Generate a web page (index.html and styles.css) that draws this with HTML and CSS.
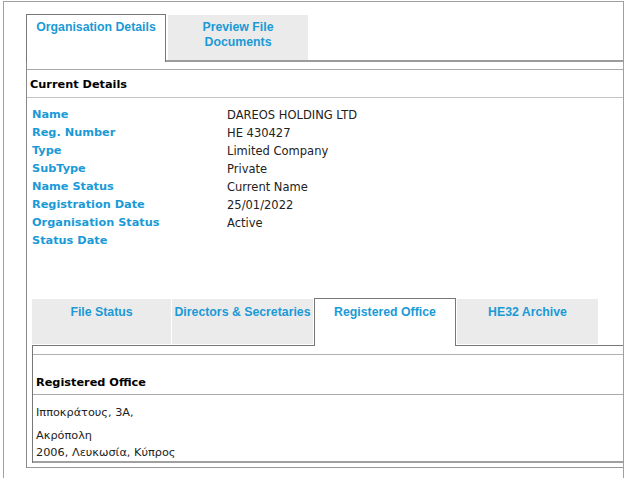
FILE: index.html
```html
<!DOCTYPE html>
<html lang="en">
<head>
    <meta charset="UTF-8">
    <meta name="viewport" content="width=device-width, initial-scale=1.0">
    <title>Organisation Details</title>
    <link rel="stylesheet" href="styles.css">
</head>
<body>
<div class="frame">
    <div class="tabs top-tabs">
        <div class="tab active">Organisation Details</div>
        <div class="tab">Preview File<br>Documents</div>
    </div>
    <div class="panel">
        <div class="section-title">Current Details</div>
        <div class="content">
            <div class="details">
                <span class="label">Name</span><span class="value">DAREOS HOLDING LTD</span>
                <span class="label">Reg. Number</span><span class="value">HE 430427</span>
                <span class="label">Type</span><span class="value">Limited Company</span>
                <span class="label">SubType</span><span class="value">Private</span>
                <span class="label">Name Status</span><span class="value">Current Name</span>
                <span class="label">Registration Date</span><span class="value">25/01/2022</span>
                <span class="label">Organisation Status</span><span class="value">Active</span>
                <span class="label">Status Date</span><span class="value"></span>
            </div>

            <div class="tabs sub-tabs">
                <div class="tab tab-file">File Status</div>
                <div class="tab tab-dir">Directors &amp; Secretaries</div>
                <div class="tab tab-reg active">Registered Office</div>
                <div class="tab tab-arch">HE32 Archive</div>
            </div>
            <div class="subpanel">
                <div class="box">
                    <div class="box-title">Registered Office</div>
                    <div class="address">
                        <div>Ιπποκράτους, 3Α,</div>
                        <div class="gap">Ακρόπολη</div>
                        <div class="last">2006, Λευκωσία, Κύπρος</div>
                    </div>
                </div>
            </div>
        </div>
    </div>
</div>
</body>
</html>
```

FILE: styles.css
```css
/* Global Styles */
html, body {
    overflow: hidden;
}

body {
    margin: 0;
    padding: 0;
    background-color: white;
    font-family: 'DejaVu Sans', Verdana, sans-serif;
    font-size: 11.3px;
    color: #222;
}

.frame {
    box-sizing: border-box;
    width: 621px;
    margin: 1px 0 0 3px;
    border: 1px solid #a0a0a0;
    padding: 12px 0 30px 22px;
}

/* Tabs */
.tabs {
    display: flex;
    align-items: flex-end;
}

.tab {
    box-sizing: border-box;
    background-color: #ebebeb;
    color: #1a9ad6;
    font-family: 'Liberation Sans', Arial, sans-serif;
    font-weight: bold;
    font-size: 12.3px;
    line-height: 15px;
    text-align: center;
    white-space: nowrap;
}

.tab.active {
    background-color: white;
    border: 1px solid #777;
    border-bottom: none;
}

.top-tabs {
    gap: 2px;
    border-bottom: 2px solid #9c9c9c;
}

.top-tabs .tab {
    width: 140px;
    height: 45px;
    padding-top: 5px;
}

.top-tabs .tab.active {
    height: 48px;
    margin-bottom: -2px;
}

.sub-tabs {
    gap: 1px;
    margin-top: 48px;
    border-bottom: 1px solid #777;
}

.sub-tabs .tab {
    height: 45px;
    margin-bottom: 1px;
    padding-top: 6px;
}

.sub-tabs .tab.active {
    height: 48px;
    margin-bottom: -1px;
}

.tab-file { width: 139px; }
.tab-dir { width: 141px; }
.tab-reg { width: 142px; }
.tab-arch { width: 141px; }

/* Panels */
.panel {
    border-left: 1px solid #888;
    border-bottom: 1px solid #999;
    padding-top: 7px;
}

.section-title {
    border-top: 1px solid #a8a8a8;
    border-bottom: 1px solid #c4c4c4;
    padding: 2px 0 0 3px;
    line-height: 25px;
    font-weight: bold;
    color: black;
}

.content {
    padding: 0 0 4px 5px;
}

.details {
    display: grid;
    grid-template-columns: 195px 1fr;
    padding-top: 8px;
    line-height: 18px;
}

.label {
    color: #1a9ad6;
    font-weight: bold;
}

.value {
    font-size: 11.5px;
    color: #222;
}

.subpanel {
    border-left: 1px solid #777;
    padding-top: 8px;
}

.box {
    border-top: 1px solid #b0b0b0;
    border-bottom: 2px solid #a0a0a0;
}

.box-title {
    padding: 20px 3px 3px;
    line-height: 16px;
    font-weight: bold;
    color: black;
    border-bottom: 1px solid #aaa;
}

.address {
    padding: 9px 3px 0;
    line-height: 18px;
}

.address .gap {
    margin-top: 5px;
}

.address .last {
    line-height: 16px;
}
```
